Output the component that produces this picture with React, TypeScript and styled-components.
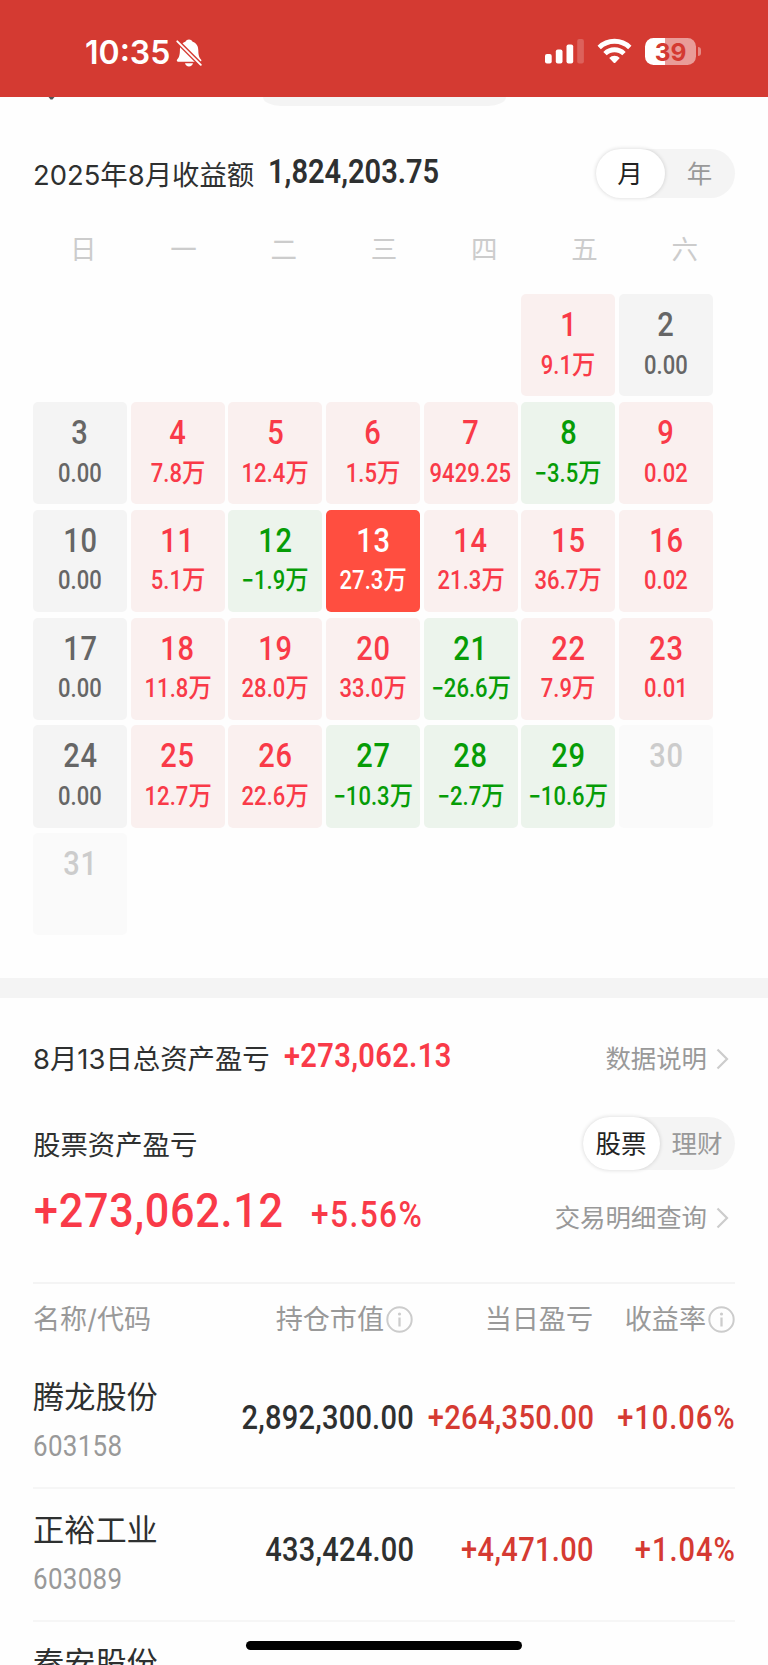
import React from "react";
import styled, { createGlobalStyle, css } from "styled-components";

const GlobalStyle = createGlobalStyle`
  * { box-sizing: border-box; }
  body { margin: 0; background: #fff; }
`;

const textFont = `Inter, "Noto Sans CJK SC", sans-serif`;
const numberFont = `Roboto, "Noto Sans CJK SC", sans-serif`;

const Screen = styled.main`
  position: relative;
  display: flex;
  flex-direction: column;
  width: 768px;
  height: 1665px;
  overflow: hidden;
  background: #fefefe;
  color: #2e3030;
  font-family: ${textFont};
  white-space: nowrap;
`;

const StatusBar = styled.header`
  display: flex;
  flex: none;
  align-items: center;
  height: 97px;
  padding: 8px 67px 0 85px;
  background: #d43a32;
  color: #fff;
`;

const Clock = styled.span`
  width: 91px;
  font-size: 32px;
  font-weight: 580;
  line-height: 40px;
  letter-spacing: 0;
`;

const StatusIcons = styled.div`
  display: flex;
  align-items: center;
  margin: 0 0 3px auto;
`;

const Battery = styled.div`
  display: flex;
  align-items: center;
  gap: 2px;
  margin-left: 13px;
`;

const BatteryBody = styled.div`
  width: 51px;
  height: 27px;
  border-radius: 8.5px;
  background: linear-gradient(to right, #fff 20px, #e99c98 20px);
  color: #d43a32;
  font-size: 24.5px;
  font-weight: 700;
  line-height: 28px;
  text-align: center;
`;

const BatteryTip = styled.div`
  width: 3px;
  height: 9px;
  border-radius: 0 4px 4px 0;
  background: #e58a85;
`;

const ScrolledNav = styled.div`
  display: flex;
  flex: none;
  align-items: flex-start;
  height: 46px;
  padding-left: 48px;
`;

const NavPillEdge = styled.div`
  width: 243px;
  height: 9px;
  margin-left: 207px;
  border-radius: 0 0 18px 18px / 0 0 9px 9px;
  background: #f4f4f4;
`;

const Section = styled.section`
  flex: none;
  padding: 0 33px;
`;

const Row = styled.div<{ $height: number; $bottom?: number }>`
  display: flex;
  align-items: center;
  height: ${(p) => p.$height}px;
  padding-bottom: ${(p) => p.$bottom ?? 0}px;
`;

const Title = styled.h2`
  margin: 0;
  padding-top: 2px;
  font-size: 27.4px;
  font-weight: 400;
  line-height: 40px;
`;

type NumProps = {
  $size: number;
  $weight?: number;
  $color?: string;
  $origin?: "left" | "center" | "right";
  $track?: number;
};

const Num = styled.span<NumProps>`
  display: inline-block;
  font-family: ${numberFont};
  font-size: ${(p) => p.$size}px;
  font-weight: ${(p) => p.$weight ?? 500};
  line-height: 1.2;
  letter-spacing: ${(p) => p.$track ?? 0.012}em;
  color: ${(p) => p.$color ?? "inherit"};
  transform: scaleX(0.88);
  transform-origin: ${(p) => p.$origin ?? "left"} center;
`;

const TitleNum = styled(Num)`
  margin: 0 0 4px 14px;
`;

const Toggle = styled.div<{ $height: number }>`
  display: flex;
  height: ${(p) => p.$height}px;
  margin-left: auto;
  border-radius: 30px;
  background: #f4f4f4;
`;

const ToggleItem = styled.button<{ $active?: boolean; $width: number }>`
  width: ${(p) => p.$width}px;
  padding: 1px 1px 0 0;
  border: 0;
  border-radius: 30px;
  background: none;
  color: #999;
  font: 400 25.5px/40px ${textFont};
  ${(p) =>
    p.$active &&
    css`
      background: #fff;
      color: #222;
      box-shadow: 0 0 4px rgba(0, 0, 0, 0.16);
    `}
`;

const Weekdays = styled.div`
  display: grid;
  grid-template-columns: repeat(7, 1fr);
  height: 90.3px;
  padding-top: 25px;
  color: #ccc;
  font-size: 26.5px;
  line-height: 40px;
  text-align: center;
`;

const Calendar = styled.div`
  display: grid;
  grid-template-columns: repeat(7, 94px);
  grid-auto-rows: 102.2px;
  column-gap: 3.7px;
  row-gap: 5.6px;
  height: 684px;
`;

type Tone = "up" | "down" | "flat" | "future" | "picked";

const tones: Record<Tone, [string, string]> = {
  up: ["#faf0ef", "#f93a48"],
  down: ["#ecf4ec", "#069c06"],
  flat: ["#f4f4f4", "#666"],
  future: ["#fafafa", "#ccc"],
  picked: ["#ff4e40", "#fff"],
};

const DayCell = styled.div<{ $tone: Tone; $start?: number }>`
  display: flex;
  flex-direction: column;
  align-items: center;
  padding-top: 11px;
  border-radius: 5px;
  background: ${(p) => tones[p.$tone][0]};
  color: ${(p) => tones[p.$tone][1]};
  ${(p) => p.$start && css`grid-column-start: ${p.$start};`}
`;

const DayValue = styled(Num)`
  height: 30px;
  margin-top: 6px;
  line-height: 30px;
`;

const Unit = styled.span`
  font-size: 26.5px;
  font-weight: 500;
  letter-spacing: 0;
  line-height: 1;
  vertical-align: 0.5px;
`;

const Band = styled.div`
  flex: none;
  height: 20px;
  background: #f4f4f4;
`;

const LinkButton = styled.button<{ $drop?: number }>`
  display: flex;
  align-items: center;
  gap: 9px;
  margin: ${(p) => p.$drop ?? 0}px 0 0 auto;
  padding: 1px 6px 0 0;
  border: 0;
  background: none;
  color: #999;
  font: 400 25.4px/40px ${textFont};
`;

const Percent = styled(Num)`
  margin: 8px 0 0 -7px;
`;

const Total = styled(Num)`
  margin: 0 0 1px 1px;
`;

const Table = styled.div`
  flex: none;
  margin: 0 33px;
  border-top: 2px solid #f4f4f4;
`;

const columns = css`
  display: grid;
  grid-template-columns: 180px 200px 180px 142px;
`;

const TableHead = styled.div`
  ${columns}
  height: 73px;
  color: #999;
  font-size: 27.1px;
  line-height: 72px;
`;

const HeadCell = styled.div<{ $right?: boolean }>`
  display: flex;
  align-items: center;
  justify-content: ${(p) => (p.$right ? "flex-end" : "flex-start")};
  gap: 2px;

  svg {
    margin-bottom: 2px;
  }
`;

const StockRow = styled.div`
  ${columns}
  align-items: center;
  height: 132.6px;
  padding-bottom: 9px;
  border-bottom: 2px solid #f6f6f6;
`;

const StockName = styled.div`
  display: flex;
  flex-direction: column;
  align-items: flex-start;
  gap: 12px;
  padding-top: 7px;
  font-size: 31.2px;
  line-height: 40px;
`;

const StockCode = styled(Num)`
  min-height: 35px;
`;

const Amount = styled(Num)`
  justify-self: end;
  margin-right: -1px;
`;

const HomeIndicator = styled.div`
  position: absolute;
  bottom: 15px;
  left: 246px;
  width: 276px;
  height: 9px;
  border-radius: 5px;
  background: #000;
`;

const BellOff = () => (
  <svg width="26" height="28" viewBox="0 0 26 28">
    <path
      d="M13 .5c1.9 0 3.2 1 3.6 2.3 3.900 1.300 5.600 4.400 5.700 8.400.100 5.500 1 7.300 2.700 9.300.8 1 .3 2.200-1 2.200H2.200c-1.300 0-1.800-1.200-1-2.200 1.700-2 2.600-3.800 2.700-9.300.1-4 1.700-7.100 5.500-8.400C9.800 1.500 11.100.5 13 .5zM9 24.300h8c-.4 1.900-2 3.100-4 3.100s-3.600-1.200-4-3.100z"
      fill="#fff"
    />
    <path d="M-.5.500 26.500 27.500" stroke="#d43a32" strokeWidth="4.600" />
    <path d="M1.300 2.300 24.800 25.800" stroke="#fff" strokeWidth="1.900" strokeLinecap="round" />
  </svg>
);

const Signal = () => (
  <svg width="40" height="26" viewBox="0 0 40 26">
    <g fill="#fff">
      <rect x="1" y="16" width="6.700" height="9.500" rx="2" />
      <rect x="11.800" y="11.500" width="6.700" height="14" rx="2" />
      <rect x="22.500" y="6.500" width="6.700" height="19" rx="2" />
      <rect x="33.200" y="1" width="6.700" height="24.500" rx="2" opacity=".2" />
    </g>
  </svg>
);

const WifiSpacer = styled.span`
  display: flex;
  margin: 0 0 1px 13px;
`;

const Wifi = () => (
  <svg width="35" height="26" viewBox="0 0 35 26">
    <g fill="none" stroke="#fff" strokeWidth="4.800">
      <path d="M2.200 9.500a21.900 21.900 0 0 1 30.600 0" />
      <path d="M8 15.600a13.600 13.600 0 0 1 19 0" />
    </g>
    <path d="M12.200 20a7.500 7.500 0 0 1 10.600 0l-4.500 4.700a1.100 1.100 0 0 1-1.600 0z" fill="#fff" />
  </svg>
);

const Chevron = () => (
  <svg width="13" height="22" viewBox="0 0 13 22">
    <path d="M1.500 1.500 11 11l-9.500 9.500" fill="none" stroke="#ccc" strokeWidth="2.200" />
  </svg>
);

const Info = () => (
  <svg width="27" height="27" viewBox="0 0 27 27">
    <circle cx="13.500" cy="13.500" r="12.200" fill="none" stroke="#ccc" strokeWidth="2" />
    <circle cx="13.500" cy="8" r="1.600" fill="#ccc" />
    <path d="M13.500 11.500v9" stroke="#ccc" strokeWidth="2.300" />
  </svg>
);

const BackTip = () => (
  <svg width="8" height="3" viewBox="0 0 8 3">
    <path d="M.5 0h6L4.500 2.500h-2z" fill="#555" />
  </svg>
);

const days: [number, string, Tone][] = [
  [1, "9.1万", "up"], [2, "0.00", "flat"],
  [3, "0.00", "flat"], [4, "7.8万", "up"], [5, "12.4万", "up"], [6, "1.5万", "up"], [7, "9429.25", "up"], [8, "−3.5万", "down"], [9, "0.02", "up"],
  [10, "0.00", "flat"], [11, "5.1万", "up"], [12, "−1.9万", "down"], [13, "27.3万", "picked"], [14, "21.3万", "up"], [15, "36.7万", "up"], [16, "0.02", "up"],
  [17, "0.00", "flat"], [18, "11.8万", "up"], [19, "28.0万", "up"], [20, "33.0万", "up"], [21, "−26.6万", "down"], [22, "7.9万", "up"], [23, "0.01", "up"],
  [24, "0.00", "flat"], [25, "12.7万", "up"], [26, "22.6万", "up"], [27, "−10.3万", "down"], [28, "−2.7万", "down"], [29, "−10.6万", "down"], [30, "", "future"],
  [31, "", "future"],
];

const stocks = [
  { name: "腾龙股份", code: "603158", value: "2,892,300.00", profit: "+264,350.00", rate: "+10.06%" },
  { name: "正裕工业", code: "603089", value: "433,424.00", profit: "+4,471.00", rate: "+1.04%" },
  { name: "秦安股份", code: "", value: "", profit: "", rate: "" },
];

export default function App() {
  return (
    <Screen>
      <GlobalStyle />
      <StatusBar>
        <Clock>10:35</Clock>
        <BellOff />
        <StatusIcons>
          <Signal />
          <WifiSpacer><Wifi /></WifiSpacer>
          <Battery>
            <BatteryBody>39</BatteryBody>
            <BatteryTip />
          </Battery>
        </StatusIcons>
      </StatusBar>
      <ScrolledNav>
        <BackTip />
        <NavPillEdge />
      </ScrolledNav>

      <Section>
        <Row $height={61}>
          <Title>2025年8月收益额</Title>
          <TitleNum $size={33} $weight={600} $track={0}>1,824,203.75</TitleNum>
          <Toggle $height={49}>
            <ToggleItem $active $width={69}>月</ToggleItem>
            <ToggleItem $width={70}>年</ToggleItem>
          </Toggle>
        </Row>
        <Weekdays>
          {[..."日一二三四五六"].map((d) => <span key={d}>{d}</span>)}
        </Weekdays>
        <Calendar>
          {days.map(([day, value, tone]) => (
            <DayCell key={day} $tone={tone} $start={day === 1 ? 6 : undefined}>
              <Num $size={33} $track={0.02} $origin="center">{day}</Num>
              <DayValue $size={25} $track={0.002} $origin="center">
                {value.replace("万", "")}
                {value.endsWith("万") && <Unit>万</Unit>}
              </DayValue>
            </DayCell>
          ))}
        </Calendar>
      </Section>

      <Band />

      <Section>
        <Row $height={119.5}>
          <Title>8月13日总资产盈亏</Title>
          <TitleNum $size={33} $weight={600} $color="#f93a48">+273,062.13</TitleNum>
          <LinkButton>数据说明<Chevron /></LinkButton>
        </Row>
        <Row $height={52}>
          <Title>股票资产盈亏</Title>
          <Toggle $height={53}>
            <ToggleItem $active $width={77}>股票</ToggleItem>
            <ToggleItem $width={75}>理财</ToggleItem>
          </Toggle>
        </Row>
        <Row $height={112} $bottom={28}>
          <Total $size={49} $track={0.017} $color="#f93a48">+273,062.12</Total>
          <Percent $size={36} $track={0.045} $color="#f93a48">+5.56%</Percent>
          <LinkButton $drop={12}>交易明细查询<Chevron /></LinkButton>
        </Row>
      </Section>

      <Table>
        <TableHead>
          <HeadCell>名称/代码</HeadCell>
          <HeadCell $right>持仓市值<Info /></HeadCell>
          <HeadCell $right>当日盈亏</HeadCell>
          <HeadCell $right>收益率<Info /></HeadCell>
        </TableHead>
        {stocks.map((s) => (
          <StockRow key={s.name}>
            <StockName>
              {s.name}
              <StockCode $size={29.5} $weight={450} $color="#999">{s.code}</StockCode>
            </StockName>
            <Amount $size={33} $track={0.008} $origin="right">{s.value}</Amount>
            <Amount $size={33} $origin="right" $color="#d53a32">{s.profit}</Amount>
            <Amount $size={33} $track={0.034} $origin="right" $color="#d53a32">{s.rate}</Amount>
          </StockRow>
        ))}
      </Table>
      <HomeIndicator />
    </Screen>
  );
}
